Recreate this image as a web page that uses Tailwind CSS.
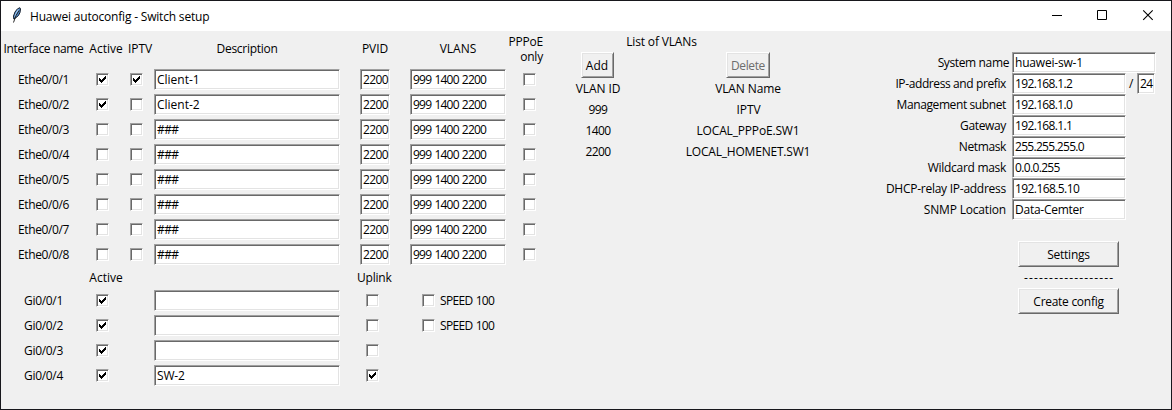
<!DOCTYPE html>
<html lang="en">
<head>
<meta charset="utf-8">
<title>Huawei autoconfig - Switch setup</title>
<script src="https://cdn.jsdelivr.net/npm/@tailwindcss/browser@4"></script>
</head>
<body class="bg-[#f0f0f0] overflow-hidden">
<div class="w-[1172px] h-[410px] border border-[#17171c] bg-[#f0f0f0] text-black font-['Open_Sans','Noto_Sans',sans-serif] text-[12px] leading-[15px] whitespace-nowrap flex flex-col">
  <header class="h-[30px] shrink-0 bg-white flex items-center">
    <svg class="ml-[10px] mb-[2px] w-[12px] h-[16px] shrink-0" viewBox="0 0 12 16">
      <path d="M8.800.7 6.300 2 4 5 2.500 9l.3 3L4.500 11 7.500 8.500 9 5.500 9.500 2z" fill="#4e86c6" stroke="#16202e" stroke-width="1"/>
      <path d="M7.500 2.500 5.300 6 4 10" fill="none" stroke="#a5cdf3" stroke-width="1.200"/>
      <path d="M8 3.500 5 8.500 2.500 15.500" fill="none" stroke="#111" stroke-width=".9"/>
    </svg>
    <h1 class="ml-[7px] tracking-[-0.19px]">Huawei autoconfig - Switch setup</h1>
    <div class="ml-auto flex items-center">
      <svg class="w-[46px] h-[30px]" viewBox="0 0 46 30"><path d="M18 14.500h10" stroke="#000"/></svg>
      <svg class="w-[46px] h-[30px]" viewBox="0 0 46 30"><path d="M17.500 9.500h9v9h-9z" fill="none" stroke="#000"/></svg>
      <svg class="w-[46px] h-[30px] mr-[-1px]" viewBox="0 0 46 30"><path d="m17.200 9.300 9.500 9.500M26.700 9.300 17.200 18.800" stroke="#000" stroke-width="1.100"/></svg>
    </div>
  </header>
  <main class="flex-1 flex items-start">
    <section class="w-[542px]" id="ports">
      <div class="h-[38px] flex items-center pb-[4px]">
        <div class="w-[85px] text-center tracking-[-0.34px]">Interface name</div>
        <div class="w-[40px] text-center">Active</div>
        <div class="w-[28px] text-center tracking-[-0.1px]">IPTV</div>
        <div class="w-[186px] text-center tracking-[-0.28px]">Description</div>
        <div class="w-[30px] ml-[20px] text-center tracking-[-0.11px]">PVID</div>
        <div class="w-[96px] ml-[20px] text-center">VLANS</div>
        <div class="w-[37px] pt-[2px] flex flex-col items-end text-right tracking-[-0.2px]"><span>PPPoE</span><span>only</span></div>
      </div>
      <div id="access" class="flex flex-col gap-[4px]"></div>
      <div class="h-[25px] flex items-center">
        <div class="w-[40px] ml-[85px] text-center">Active</div>
        <div class="w-[34px] ml-[231px] text-center tracking-[-0.2px]">Uplink</div>
      </div>
      <div id="gigabit" class="flex flex-col gap-[4px]"></div>
    </section>
    <section class="w-[244px] ml-[23px]">
      <div class="w-[191px] h-[21px] flex items-center justify-center tracking-[-0.16px]">List of VLANs</div>
      <div class="grid grid-cols-[64px_124px] gap-x-[56px] auto-rows-[21px] items-center justify-items-center">
        <button class="h-[26px] w-[33px] mr-[2px] mt-[5px] border border-t-white border-l-white border-b-[#696969] border-r-[#696969] shadow-[inset_1px_1px_0_#e3e3e3,inset_-1px_-1px_0_#a0a0a0]">Add</button>
        <button class="h-[26px] w-[44px] mt-[5px] border border-t-white border-l-white border-b-[#696969] border-r-[#696969] shadow-[inset_1px_1px_0_#e3e3e3,inset_-1px_-1px_0_#a0a0a0] text-[#6d6d6d] tracking-[-0.37px]">Delete</button>
      </div>
      <div class="mt-[5px] grid grid-cols-[64px_124px] gap-x-[56px] auto-rows-[21px] items-center justify-items-center">
        <span class="tracking-[-0.1px]">VLAN ID</span><span class="tracking-[-0.12px]">VLAN Name</span>
        <span class="tracking-[-0.61px]">999</span><span class="tracking-[-0.1px] pl-[1px]">IPTV</span>
        <span class="tracking-[-0.61px]">1400</span><span class="tracking-[-0.17px]">LOCAL_PPPoE.SW1</span>
        <span class="tracking-[-0.61px]">2200</span><span class="tracking-[-0.2px]">LOCAL_HOMENET.SW1</span>
      </div>
    </section>
    <section class="ml-[50px] mt-[21px] w-[300px]">
      <div id="system"></div>
      <div class="mt-[20px] ml-[158px] w-[101px] flex flex-col">
        <button class="h-[26px] mt-[1px] border border-t-white border-l-white border-b-[#696969] border-r-[#696969] shadow-[inset_1px_1px_0_#e3e3e3,inset_-1px_-1px_0_#a0a0a0] tracking-[-0.25px]">Settings</button>
        <div class="h-[21px] pl-[6px] flex items-center tracking-[1.16px]">------------------</div>
        <button class="h-[26px] border border-t-white border-l-white border-b-[#696969] border-r-[#696969] shadow-[inset_1px_1px_0_#e3e3e3,inset_-1px_-1px_0_#a0a0a0] tracking-[-0.28px]">Create config</button>
      </div>
    </section>
  </main>
</div>
<script>
const sunken = "shrink-0 bg-white border border-t-[#a0a0a0] border-l-[#a0a0a0] border-b-white border-r-white shadow-[inset_1px_1px_0_#696969,inset_-1px_-1px_0_#e3e3e3]";
const check = (on, cls) => `<div class="${sunken} w-[13px] h-[13px] ${cls}">${on ? '<svg class="block w-[11px] h-[11px]" viewBox="0 0 11 11" shape-rendering="crispEdges"><path d="M2 4h1v1h1v1h1V5h1V4h1V3h1V2h1v3H8v1H7v1H6v1H5v1H4V8H3V7H2z"/></svg>' : ''}</div>`;
const field = (text, cls) => `<div class="${sunken} h-[21px] pl-[2px] flex items-center ${cls}">${text}</div>`;

document.getElementById("access").innerHTML = [1,2,3,4,5,6,7,8].map(n => `
  <div class="h-[21px] flex items-center">
    <div class="w-[85px] text-center tracking-[-0.38px]">Ethe0/0/${n}</div>
    ${check(n < 3, "ml-[10px]")}
    ${check(n === 1, "ml-[21px]")}
    ${field(n < 3 ? "Client-" + n : "###", n < 3 ? "ml-[11px] w-[186px]" : "ml-[11px] w-[186px] tracking-[-0.6px]")}
    ${field("2200", "ml-[20px] w-[30px] tracking-[-0.61px]")}
    ${field("999 1400 2200", "ml-[20px] w-[96px] tracking-[-0.78px] [word-spacing:0.8px]")}
    ${check(false, "ml-[17px]")}
  </div>`).join("");

document.getElementById("gigabit").innerHTML = [1,2,3,4].map(n => `
  <div class="h-[21px] flex items-center">
    <div class="w-[85px] text-center tracking-[-0.31px]">Gi0/0/${n}</div>
    ${check(true, "ml-[10px]")}
    ${field(n === 4 ? "SW-2" : "", "ml-[45px] w-[186px] tracking-[-0.2px]")}
    ${check(n === 4, "ml-[26px]")}
    ${n < 3 ? check(false, "ml-[43px]") + '<span class="ml-[5px] tracking-[-0.65px] [word-spacing:0.6px]">SPEED 100</span>' : ""}
  </div>`).join("");

const rows = [
  ["System name", "tracking-[-0.37px]", "huawei-sw-1", "tracking-[-0.19px]"],
  ["IP-address and prefix", "tracking-[-0.39px]", "192.168.1.2", "tracking-[-0.65px]"],
  ["Management subnet", "tracking-[-0.39px]", "192.168.1.0", "tracking-[-0.65px]"],
  ["Gateway", "tracking-[-0.35px]", "192.168.1.1", "tracking-[-0.65px]"],
  ["Netmask", "tracking-[-0.37px]", "255.255.255.0", "tracking-[-0.7px]"],
  ["Wildcard mask", "tracking-[-0.3px]", "0.0.0.255", "tracking-[-0.65px]"],
  ["DHCP-relay IP-address", "tracking-[-0.26px]", "192.168.5.10", "tracking-[-0.58px]"],
  ["SNMP Location", "tracking-[-0.18px]", "Data-Cemter", "tracking-[-0.25px]"]
];
document.getElementById("system").innerHTML = rows.map(([label, lt, value, vt], i) => `
  <div class="h-[21px] flex items-center">
    <div class="w-[152px] text-right ${i === 0 ? "pr-[3px]" : "pr-[6px]"} ${lt}">${label}</div>
    ${field(value, (i === 0 ? "w-[144px] " : "w-[114px] ") + vt)}
    ${i === 1 ? '<span class="ml-[3px] w-[8px]">/</span>' + field("24", "w-[18px] tracking-[-0.61px]") : ""}
  </div>`).join("");
</script>
</body>
</html>
